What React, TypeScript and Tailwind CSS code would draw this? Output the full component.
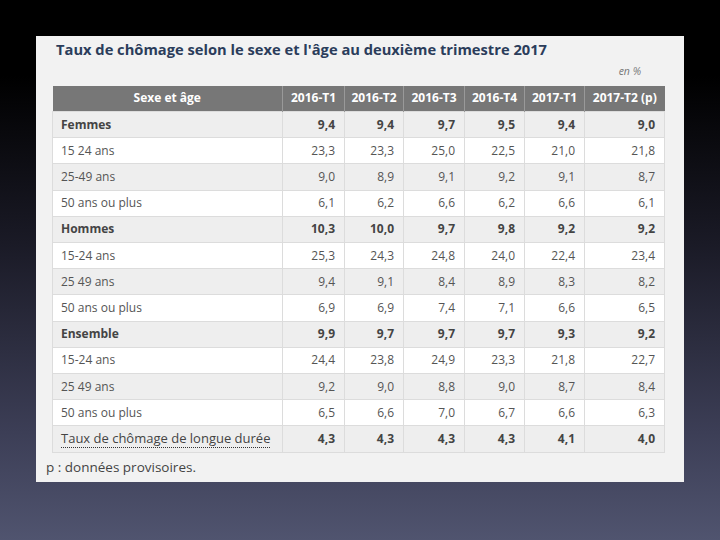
const cols = ['2016-T1', '2016-T2', '2016-T3', '2016-T4', '2017-T1', '2017-T2 (p)'];

type Row = { label: string; values: string[]; bold?: boolean; note?: boolean };

const rows: Row[] = [
  { label: 'Femmes', values: ['9,4', '9,4', '9,7', '9,5', '9,4', '9,0'], bold: true },
  { label: '15 24 ans', values: ['23,3', '23,3', '25,0', '22,5', '21,0', '21,8'] },
  { label: '25-49 ans', values: ['9,0', '8,9', '9,1', '9,2', '9,1', '8,7'] },
  { label: '50 ans ou plus', values: ['6,1', '6,2', '6,6', '6,2', '6,6', '6,1'] },
  { label: 'Hommes', values: ['10,3', '10,0', '9,7', '9,8', '9,2', '9,2'], bold: true },
  { label: '15-24 ans', values: ['25,3', '24,3', '24,8', '24,0', '22,4', '23,4'] },
  { label: '25 49 ans', values: ['9,4', '9,1', '8,4', '8,9', '8,3', '8,2'] },
  { label: '50 ans ou plus', values: ['6,9', '6,9', '7,4', '7,1', '6,6', '6,5'] },
  { label: 'Ensemble', values: ['9,9', '9,7', '9,7', '9,7', '9,3', '9,2'], bold: true },
  { label: '15-24 ans', values: ['24,4', '23,8', '24,9', '23,3', '21,8', '22,7'] },
  { label: '25 49 ans', values: ['9,2', '9,0', '8,8', '9,0', '8,7', '8,4'] },
  { label: '50 ans ou plus', values: ['6,5', '6,6', '7,0', '6,7', '6,6', '6,3'] },
  { label: 'Taux de chômage de longue durée', values: ['4,3', '4,3', '4,3', '4,3', '4,1', '4,0'], note: true },
];

const widths = ['w-[230px]', 'w-[62px]', 'w-[59px]', 'w-[61px]', 'w-[60px]', 'w-[60px]', 'w-[80px]'];

export default function App() {
  return (
    <div
      className="w-[720px] h-[540px] overflow-hidden pt-[36px] pl-[36px] bg-[linear-gradient(to_bottom,#000_0%,#000_14%,#1a1a26_45%,#3c3e56_80%,#50546f_100%)]"
      style={{ fontFamily: '"Open Sans", "Noto Sans", sans-serif' }}
    >
      <div className="w-[648px] h-[446px] bg-[#f2f2f2] flex flex-col">
        <div className="pl-[20px] pt-[3px] h-[23px] text-[14.7px] leading-[20px] font-bold text-[#2b3d5b]">
          Taux de chômage selon le sexe et l'âge au deuxième trimestre 2017
        </div>
        <div className="h-[27px] flex items-center justify-end pr-[43px] text-[10.5px] italic text-[#777]">
          en %
        </div>
        <div className="pl-[16px]">
          <table className="border-collapse table-fixed w-[612px] text-[12px] text-[#555]">
            <colgroup>
              {widths.map((w, i) => (
                <col key={i} className={w} />
              ))}
            </colgroup>
            <thead>
              <tr className="h-[26px] bg-[#777777] text-white font-bold">
                <th className="text-center border-r border-[#999]">Sexe et âge</th>
                {cols.map((c, i) => (
                  <th key={c} className={`text-center ${i < cols.length - 1 ? 'border-r border-[#999]' : ''}`}>
                    {c}
                  </th>
                ))}
              </tr>
            </thead>
            <tbody>
              {rows.map((r, i) => (
                <tr
                  key={i}
                  className={`h-[26.2px] ${i % 2 === 0 ? 'bg-[#eeeeee]' : 'bg-white'} ${r.bold ? 'font-bold text-[#444]' : ''}`}
                >
                  <td className="border border-[#dcdcdc] pl-[8px] p-0">
                    {r.note ? (
                      <span className="text-[13px] text-[#444] border-b border-dotted border-[#333]">{r.label}</span>
                    ) : (
                      r.label
                    )}
                  </td>
                  {r.values.map((v, j) => (
                    <td key={j} className={`border border-[#dcdcdc] text-right pr-[9px] ${r.note ? 'font-bold text-[#444]' : ''}`}>
                      {v}
                    </td>
                  ))}
                </tr>
              ))}
            </tbody>
          </table>
        </div>
        <div className="h-[30px] flex items-center pl-[10px] text-[13.5px] text-[#444]">p : données provisoires.</div>
      </div>
    </div>
  );
}
